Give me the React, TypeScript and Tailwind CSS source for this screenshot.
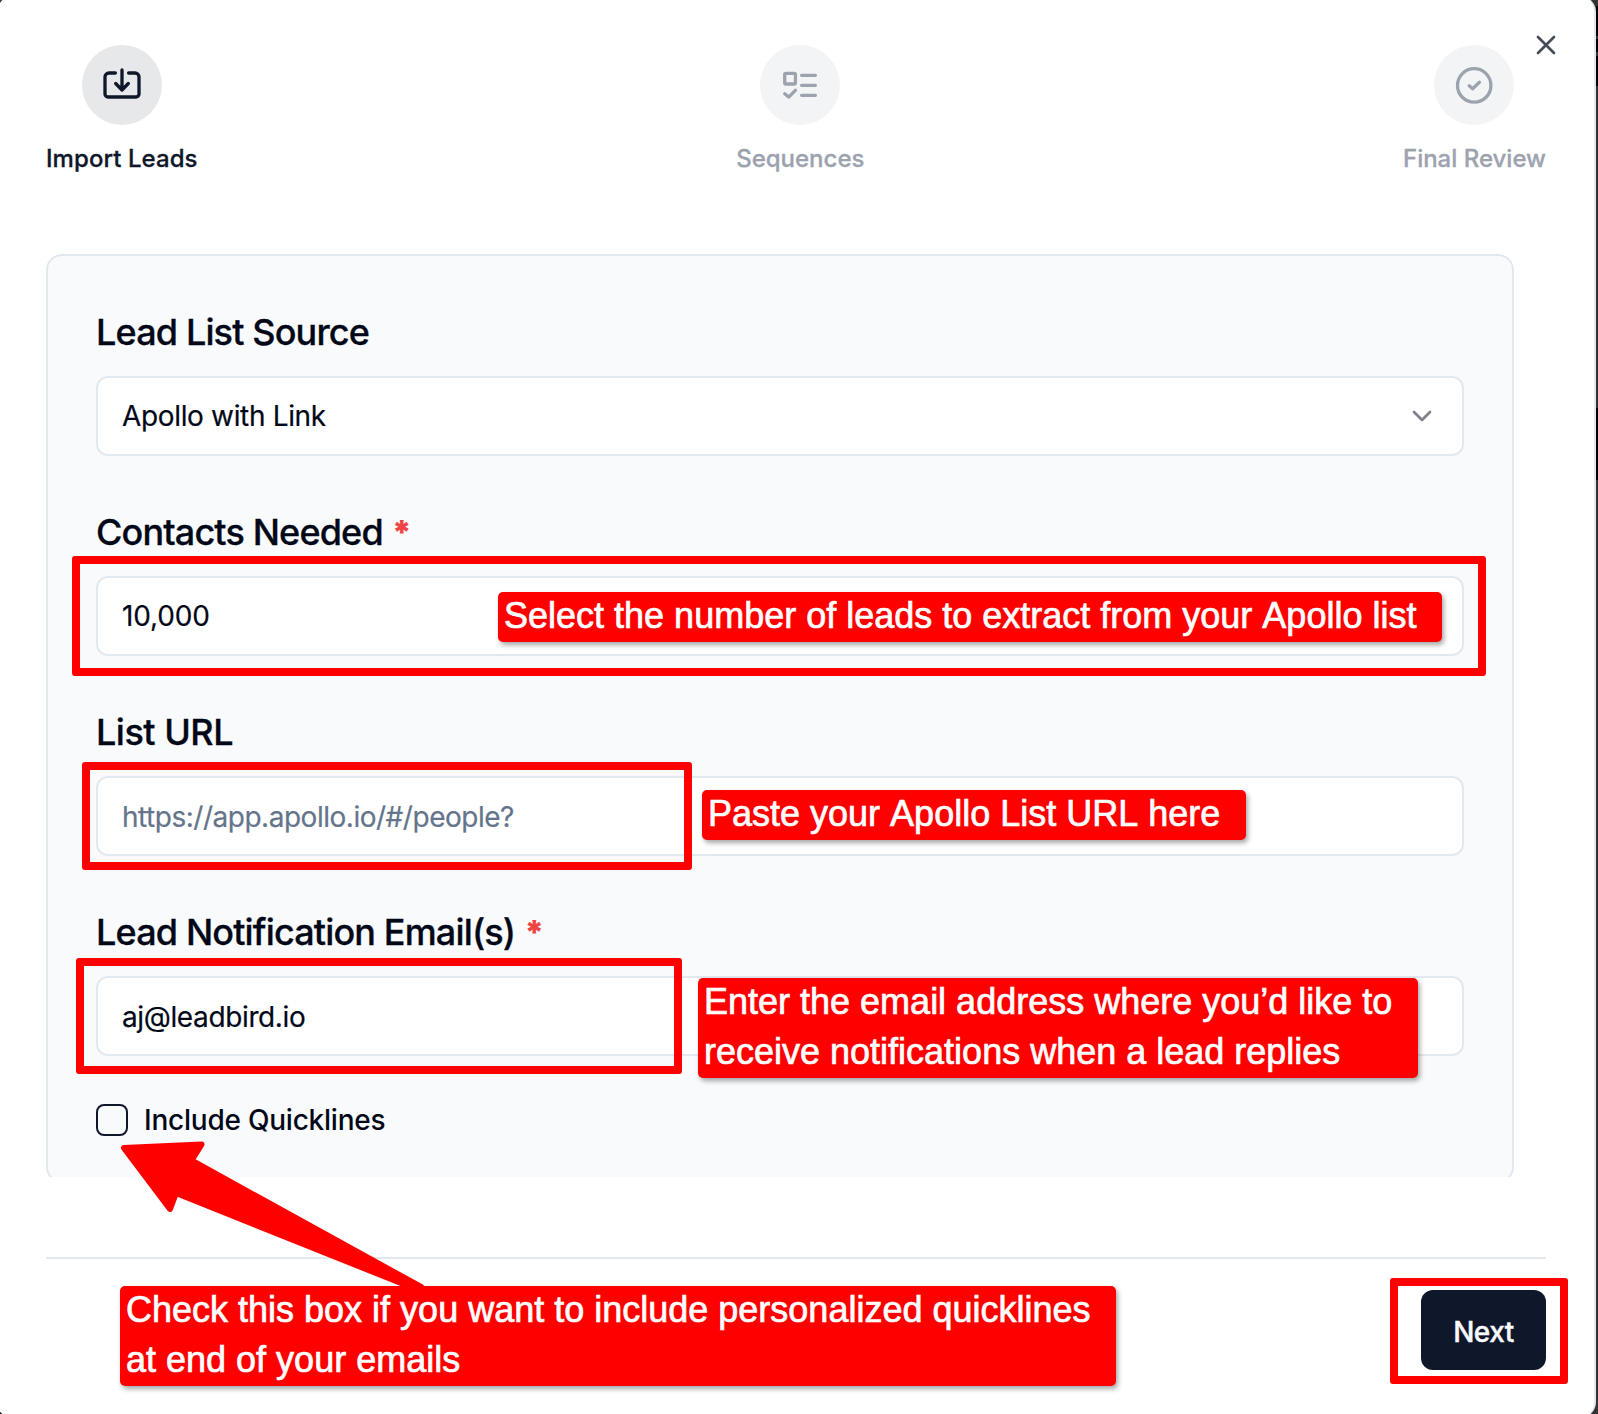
import { ChevronDown, X } from "lucide-react";
import { clsx } from "clsx";
import type { ReactNode } from "react";

function ImportIcon() {
  return (
    <svg className="h-10 w-10" viewBox="0 0 40 40" fill="none" stroke="currentColor" strokeWidth="3.3" strokeLinecap="round" strokeLinejoin="round">
      <path d="M13.4 8H7a4 4 0 0 0-4 4v17a3 3 0 0 0 3 3h28a3 3 0 0 0 3-3V12a4 4 0 0 0-4-4h-6.4" />
      <path d="M20 5v20M13.700 18.500 20 25l6.300-6.500" />
    </svg>
  );
}

function SequencesIcon() {
  return (
    <svg className="h-10 w-10" viewBox="0 0 40 40" fill="none" stroke="currentColor" strokeWidth="3.3" strokeLinecap="round" strokeLinejoin="round">
      <rect x="4.7" y="8.3" width="10.7" height="10.7" rx="1.2" />
      <path d="m4.700 28.800 4 3.300 6.700-6.800M21.600 10.300h13.800M21.600 20.300h13.800M21.600 30.300h13.800" />
    </svg>
  );
}

function ReviewIcon() {
  return (
    <svg className="h-10 w-10" viewBox="0 0 40 40" fill="none" stroke="currentColor" strokeWidth="3.3" strokeLinecap="round" strokeLinejoin="round">
      <circle cx="20.2" cy="20.4" r="16.700" />
      <path d="m15.200 20.700 3.400 3 6.800-6.500" />
    </svg>
  );
}

function Step({ icon, label, active }: { icon: ReactNode; label: string; active?: boolean }) {
  return (
    <div className={clsx("flex flex-col items-center gap-[18px]", active ? "tracking-[0.07px] text-[#0f172a]" : "text-[#9ca3af]")}>
      <div className={clsx("flex h-20 w-20 items-center justify-center rounded-full", active ? "bg-[#e7e8ea]" : "bg-[#f3f4f6]")}>
        {icon}
      </div>
      <span className="text-2xl leading-8 font-medium whitespace-nowrap [-webkit-text-stroke:0.3px_currentColor]">
        {label}
      </span>
    </div>
  );
}

function Highlight({ className }: { className: string }) {
  return <div className={clsx("pointer-events-none absolute rounded-[3px] border-8 border-[#ff0000]", className)} />;
}

function Callout({ className, children }: { className: string; children: ReactNode }) {
  return (
    <div
      className={clsx(
        "absolute rounded-[5px] bg-[#ff0000] pl-1.5 font-['Liberation_Sans',sans-serif] text-[36px] leading-[50px] whitespace-nowrap text-white shadow-[2px_3px_5px_rgba(0,0,0,0.35)] [font-kerning:none] [-webkit-text-stroke:0.7px_white]",
        className,
      )}
    >
      <p className="-mt-px">{children}</p>
    </div>
  );
}

type FieldProps = {
  label: string;
  required?: boolean;
  labelClassName?: string;
  children: ReactNode;
};

function Field({ label, required, labelClassName = "tracking-[-0.85px]", children }: FieldProps) {
  return (
    <div className="flex flex-col gap-[26px]">
      <label className="flex h-9 text-[36px] leading-9 font-medium">
        <span className={clsx("[-webkit-text-stroke:0.3px_currentColor]", labelClassName)}>{label}</span>
        {required && <span className="ml-[9px] text-[33px] leading-9 font-black text-[#ef4444]">*</span>}
      </label>
      <div className="flex h-20 items-center justify-between rounded-[12px] border-2 border-[#e2e8f0] bg-white px-6 text-[28px] leading-10 [-webkit-text-stroke:0.2px_currentColor]">
        {children}
      </div>
    </div>
  );
}

export default function App() {
  return (
    <div className="flex h-[1414px] w-[1598px] overflow-hidden bg-[#333333] font-[Inter,sans-serif] text-[#020817]">
      <div className="relative -mt-1 -ml-[3px] flex h-[1422px] w-[1599px] shrink-0 flex-col rounded-[16px] border-r-2 border-[#e2e8f0] bg-white pt-[49px] pr-12 pl-[49px]">
        <button className="absolute top-[29px] right-[28px] flex h-10 w-10 items-center justify-center text-[#464c57]">
          <X className="h-8 w-8" strokeWidth={2} />
        </button>

        {/* Steps */}
        <div className="flex justify-between">
          <Step icon={<ImportIcon />} label="Import Leads" active />
          <Step icon={<SequencesIcon />} label="Sequences" />
          <Step icon={<ReviewIcon />} label="Final Review" />
        </div>

        {/* Scroll area */}
        <div className="mt-[79px] mr-8 h-[923px] shrink-0 overflow-hidden">
          <div className="flex h-[929px] flex-col rounded-[16px] border-2 border-[#e2e8f0] bg-[#f8fafc] px-12 pt-[58px]">
            <div className="flex flex-col gap-[58px]">
              <Field label="Lead List Source">
                <span className="tracking-[-0.34px]">Apollo with Link</span>
                <ChevronDown className="h-8 w-8 opacity-50" />
              </Field>
              <Field label="Contacts Needed" required>
                <span className="tracking-[-0.17px]">10,000</span>
              </Field>
              <Field label="List URL" labelClassName="tracking-[-0.5px]">
                <span className="pt-0.5 tracking-[-0.48px] text-[#64748b]">https://app.apollo.io/#/people?</span>
              </Field>
              <Field label="Lead Notification Email(s)" required>
                <span className="pt-0.5 tracking-[-0.37px]">aj@leadbird.io</span>
              </Field>
            </div>
            <label className="mt-12 flex items-center gap-4 text-[28px] leading-8 font-medium tracking-[-0.23px]">
              <span className="h-8 w-8 rounded-[8px] border-2 border-[#0f172a]" />
              Include Quicklines
            </label>
          </div>
        </div>

        {/* Footer */}
        <div className="mt-[80px] flex justify-end border-t-2 border-[#e2e8f0] pt-[31px]">
          <button className="h-20 w-[125px] rounded-[12px] bg-[#0f172a] pt-[3px] text-[28px] font-medium tracking-[-0.5px] text-[#f8fafc] [-webkit-text-stroke:0.4px_currentColor]">
            Next
          </button>
        </div>
      </div>

      {/* Page behind the dialog */}
      <div className="flex w-0.5 shrink-0 flex-col bg-[#333333]">
        <div className="mt-1.5 h-[30px] bg-black" />
        <div className="mt-[3px] h-[13px] bg-black" />
        <div className="mt-1 h-[30px] bg-black" />
        <div className="mt-[322px] h-[72px] bg-black" />
      </div>

      {/* Annotations */}
      <Highlight className="top-[556px] left-[72px] h-[120px] w-[1414px]" />
      <Highlight className="top-[762px] left-[82px] h-[108px] w-[610px]" />
      <Highlight className="top-[958px] left-[76px] h-[116px] w-[606px]" />
      <Highlight className="top-[1278px] left-[1390px] h-[106px] w-[178px]" />
      <svg className="absolute top-[1130px] left-[110px] h-[170px] w-[330px]" viewBox="110 1130 330 170">
        <path
          d="M124 1148 L201.500 1144.500 L191.500 1160.500 L421 1287 H411 L176 1193 L170 1209 Z"
          fill="#ff0000"
          stroke="#ff0000"
          strokeWidth="6"
          strokeLinejoin="round"
        />
      </svg>
      <Callout className="top-[592px] left-[498px] h-[50px] w-[944px]">
        Select the number of leads to extract from your Apollo list
      </Callout>
      <Callout className="top-[790px] left-[702px] h-[50px] w-[544px]">Paste your Apollo List URL here</Callout>
      <Callout className="top-[978px] left-[698px] h-[100px] w-[720px]">
        Enter the email address where you’d like to
        <br />
        receive notifications when a lead replies
      </Callout>
      <Callout className="top-[1286px] left-[120px] h-[100px] w-[996px]">
        Check this box if you want to include personalized quicklines
        <br />
        at end of your emails
      </Callout>
    </div>
  );
}
